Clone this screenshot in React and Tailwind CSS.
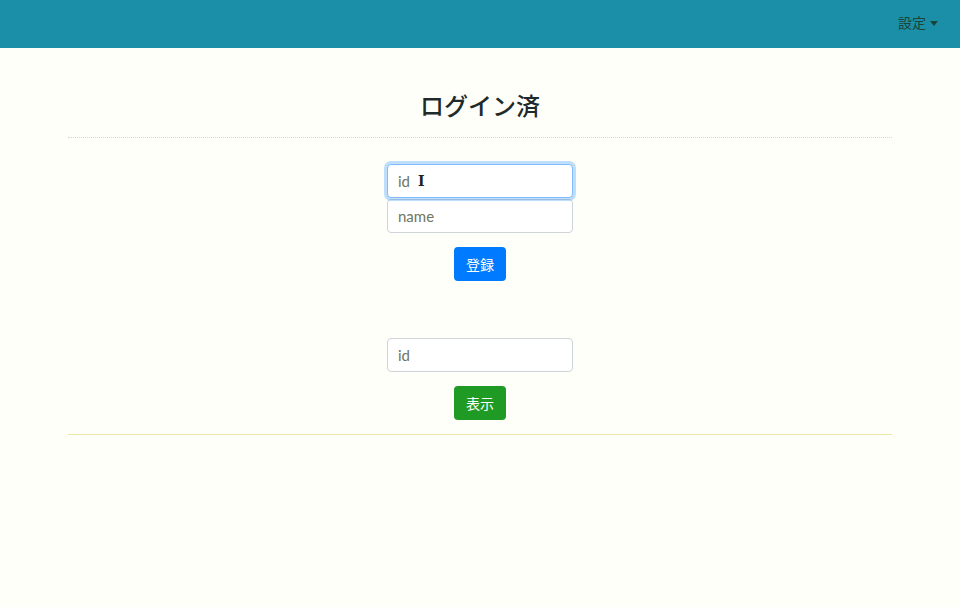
import React from 'react';

const App = () => {
    return (
        <div className="min-h-[607px] bg-[#fffffa] text-[#212529]" style={{ fontFamily: 'Lato, "Noto Sans CJK JP", sans-serif' }}>
            <nav className="h-[48px] bg-[#1b8fa8] flex items-start justify-end pr-[22px] pt-[13px]">
                <button className="flex items-center gap-[4px] text-[14px] leading-[20px] text-[#1c4436]">
                    <span>設定</span>
                    <span className="w-0 h-0 border-l-[4px] border-r-[4px] border-t-[5px] border-l-transparent border-r-transparent border-t-[#1c4436] mt-[1px]"></span>
                </button>
            </nav>

            <div className="mx-[68px]">
                <h1 className="pt-[43px] text-center text-[24px] leading-[29px] font-medium text-[#1f2a2a]">ログイン済</h1>
                <div className="mt-[17px] border-t border-dotted border-[#d8d6c4]"></div>

                <div className="flex flex-col items-center pt-[26px]">
                    <div className="w-[186px] flex flex-col">
                        <div className="relative">
                            <input
                                className="w-full h-[34px] px-[10px] text-[15px] bg-white border border-[#80bdff] rounded-[4px] outline-none shadow-[0_0_0_3px_rgba(0,123,255,0.25)] placeholder-[#6f7560]"
                                placeholder="id"
                            />
                            <span className="absolute left-[31px] top-[9px] text-[14px] leading-[16px] font-bold text-[#222]" style={{ fontFamily: '"DejaVu Serif", serif' }}>I</span>
                        </div>
                        <input
                            className="w-full h-[34px] px-[10px] text-[15px] bg-white border border-[#ced4da] rounded-[4px] outline-none placeholder-[#6f7560] mt-[1px]"
                            placeholder="name"
                        />
                    </div>
                    <button className="mt-[14px] w-[52px] h-[34px] rounded-[4px] bg-[#007bff] text-white text-[14px]">登録</button>

                    <input
                        className="mt-[57px] w-[186px] h-[34px] px-[10px] text-[15px] bg-white border border-[#ced4da] rounded-[4px] outline-none placeholder-[#6f7560]"
                        placeholder="id"
                    />
                    <button className="mt-[14px] w-[52px] h-[34px] rounded-[4px] bg-[#1f9a25] text-white text-[14px]">表示</button>
                </div>
                <div className="mt-[14px] border-t border-solid border-t-[#ebe6a8]"></div>
            </div>
        </div>
    );
};

export default App;
